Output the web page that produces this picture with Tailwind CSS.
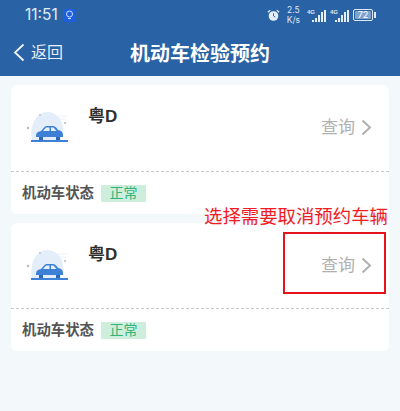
<!DOCTYPE html>
<html>
  <head>
    <meta charset="utf-8" />
    <meta name="viewport" content="width=device-width, initial-scale=1" />
    <title>机动车检验预约</title>
    <script src="https://cdn.jsdelivr.net/npm/@tailwindcss/browser@4"></script>
  </head>

  <body class="font-['Liberation_Sans','Noto_Sans_CJK_SC',sans-serif] bg-[#f3f8fb] antialiased overflow-hidden">
    <div class="relative w-[400px] h-[411px] overflow-hidden">
      <!-- header -->
      <div class="bg-[#2a62a6] h-[76px] text-white">
        <div class="flex items-center justify-between h-[29px] pt-[1px] pl-[25px] pr-[24px]">
          <div class="flex items-center gap-[5px]">
            <span class="text-[15.500px] font-['Inter',sans-serif] leading-none text-[#e3ecf6]">11:51</span>
            <span class="w-[13px] h-[13px] rounded-[3px] bg-[#1d5fdc] flex items-center justify-center">
              <svg width="9" height="10" viewBox="0 0 9 10" fill="none" stroke="#cfe0ff" stroke-width="1"><circle cx="4.5" cy="4" r="3"/><path d="M3 8.5h3"/></svg>
            </span>
          </div>
          <div class="flex items-center text-[#dfe9f5]">
            <svg width="13" height="13" viewBox="0 0 14 14" class="mr-[7px]" fill="#e6eef7"><circle cx="7" cy="7.5" r="5.2"/><path d="M1 3.5 3.5 1.2M13 3.5 10.5 1.2" stroke="#e6eef7" stroke-width="1.4"/><path d="M7 4.5v3l2 1.3" fill="none" stroke="#2a62a6" stroke-width="1"/></svg>
            <div class="flex flex-col items-center text-[8.500px] leading-[10px] mr-[7px] font-['Inter',sans-serif]"><span>2.5</span><span>K/s</span></div>
            <div class="flex items-end h-[13px] mr-[4px] relative w-[19px] gap-[1px] justify-end">
              <span class="absolute left-0 top-0 text-[6px] leading-none font-bold">4G</span>
              <i class="w-[2px] h-[2px] bg-[#e6eef7]"></i><i class="w-[2px] h-[4px] bg-[#e6eef7]"></i><i class="w-[2px] h-[7px] bg-[#e6eef7]"></i><i class="w-[2px] h-[10px] bg-[#e6eef7]"></i><i class="w-[2px] h-[12px] bg-[#e6eef7]"></i>
            </div>
            <div class="flex items-end h-[13px] mr-[4px] relative w-[19px] gap-[1px] justify-end">
              <span class="absolute left-0 top-0 text-[6px] leading-none font-bold">4G</span>
              <i class="w-[2px] h-[2px] bg-[#e6eef7]"></i><i class="w-[2px] h-[4px] bg-[#e6eef7]"></i><i class="w-[2px] h-[7px] bg-[#e6eef7]"></i><i class="w-[2px] h-[10px] bg-[#e6eef7]"></i><i class="w-[2px] h-[12px] bg-[#e6eef7]"></i>
            </div>
            <div class="flex items-center">
              <div class="w-[20px] h-[12px] border border-[#dfe9f5] rounded-[2px] p-[1px] flex">
                <div class="flex-1 bg-[#7fa3cf] rounded-[1px] text-[9px] leading-[8px] text-center text-white font-['Inter',sans-serif]">72</div>
              </div>
              <i class="w-[2px] h-[6px] bg-[#dfe9f5] ml-[1px]"></i>
            </div>
          </div>
        </div>
        <div class="relative flex items-center justify-center h-[47px] pt-[3px]">
          <div class="absolute left-[13px] top-[14px] flex items-center gap-[6px]">
            <svg width="12" height="19" viewBox="0 0 12 19" fill="none" stroke="#eef3f9" stroke-width="1.8"><path d="M10.5 1.5 2 9.5l8.5 8"/></svg>
            <span class="text-[16px] leading-none text-[#e8eff7]">返回</span>
          </div>
          <span class="text-[20px] font-bold leading-none">机动车检验预约</span>
        </div>
      </div>

      <!-- vehicle list -->
      <div class="flex flex-col gap-[9px] px-[11px] pt-[9px]">
        <div class="bg-white rounded-[6px] h-[129px] flex flex-col">
          <div class="relative h-[87px] border-b border-dashed border-[#c6c9cc] flex items-center">
            <div class="ml-[15px] flex">
              <svg width="46" height="36" viewBox="0 0 46 36">
                <path d="M6 30C3 16 10 2 21 2c9 0 16 7 16 17 0 4-1 8-3 11z" fill="#e4eefb"/>
                <path d="M30 6h12M33 9h8" stroke="#eef3fa" stroke-width="1"/>
                <circle cx="2" cy="18" r="1.200" fill="#aeb9c8"/><circle cx="14" cy="5" r="1" fill="#b8c4d4"/><circle cx="39" cy="13" r="1" fill="#aeb9c8"/>
                <path d="M10 27c0-4 1-5 5-6l4-4.500c1-.5 2-.5 3-.5h5c2 0 3 1 5 4 3 .5 5 2 5 5v2z" fill="#3d80d6"/>
                <path d="M20 17.500h3.500V21H17zM25 17.500h2.500l3 3.500H25z" fill="#e8f0fb"/>
                <path d="M13 27h4v3h-4zM30 27h4v3h-4z" fill="#2d68b4"/>
                <rect x="5" y="30" width="37" height="2" fill="#3d80d6"/>
              </svg>
            </div>
            <span class="absolute left-[77px] top-[23px] text-[17px] font-bold leading-none text-[#2f2f2f]">粤D</span>
            <div class="absolute right-[17px] top-[34px] flex items-center gap-[6px]">
              <span class="text-[17px] leading-none text-[#b0b0b0]">查询</span>
              <svg width="11" height="17" viewBox="0 0 11 17" fill="none" stroke="#b0b0b0" stroke-width="2"><path d="M1.500 1.500 9 8.500l-7.500 7"/></svg>
            </div>
          </div>
          <div class="flex items-center flex-1 pl-[11px] gap-[7px]">
            <span class="text-[14.400px] font-bold text-[#555] leading-none">机动车状态</span>
            <span class="w-[45px] h-[17px] bg-[#cdeedd] rounded-[1px] text-[14px] leading-[17px] text-center text-[#34b377]">正常</span>
          </div>
        </div>

        <div class="bg-white rounded-[6px] h-[128px] flex flex-col">
          <div class="relative h-[86px] border-b border-dashed border-[#c6c9cc] flex items-center">
            <div class="ml-[15px] flex">
              <svg width="46" height="36" viewBox="0 0 46 36">
                <path d="M6 30C3 16 10 2 21 2c9 0 16 7 16 17 0 4-1 8-3 11z" fill="#e4eefb"/>
                <path d="M30 6h12M33 9h8" stroke="#eef3fa" stroke-width="1"/>
                <circle cx="2" cy="18" r="1.200" fill="#aeb9c8"/><circle cx="14" cy="5" r="1" fill="#b8c4d4"/><circle cx="39" cy="13" r="1" fill="#aeb9c8"/>
                <path d="M10 27c0-4 1-5 5-6l4-4.500c1-.5 2-.5 3-.5h5c2 0 3 1 5 4 3 .5 5 2 5 5v2z" fill="#3d80d6"/>
                <path d="M20 17.500h3.500V21H17zM25 17.500h2.500l3 3.500H25z" fill="#e8f0fb"/>
                <path d="M13 27h4v3h-4zM30 27h4v3h-4z" fill="#2d68b4"/>
                <rect x="5" y="30" width="37" height="2" fill="#3d80d6"/>
              </svg>
            </div>
            <span class="absolute left-[77px] top-[23px] text-[17px] font-bold leading-none text-[#2f2f2f]">粤D</span>
            <div class="absolute right-[17px] top-[34px] flex items-center gap-[6px]">
              <span class="text-[17px] leading-none text-[#b0b0b0]">查询</span>
              <svg width="11" height="17" viewBox="0 0 11 17" fill="none" stroke="#b0b0b0" stroke-width="2"><path d="M1.500 1.500 9 8.500l-7.500 7"/></svg>
            </div>
          </div>
          <div class="flex items-center flex-1 pl-[11px] gap-[7px]">
            <span class="text-[14.400px] font-bold text-[#555] leading-none">机动车状态</span>
            <span class="w-[45px] h-[17px] bg-[#cdeedd] rounded-[1px] text-[14px] leading-[17px] text-center text-[#34b377]">正常</span>
          </div>
        </div>
      </div>

      <!-- red annotation over the screenshot -->
      <span class="absolute left-[204px] top-[208px] text-[18.400px] leading-[18px] text-[#f01c24] whitespace-nowrap">选择需要取消预约车辆</span>
      <div class="absolute left-[283px] top-[232px] w-[103px] h-[62px] border-2 border-[#e5141c]"></div>
    </div>
  </body>
</html>
